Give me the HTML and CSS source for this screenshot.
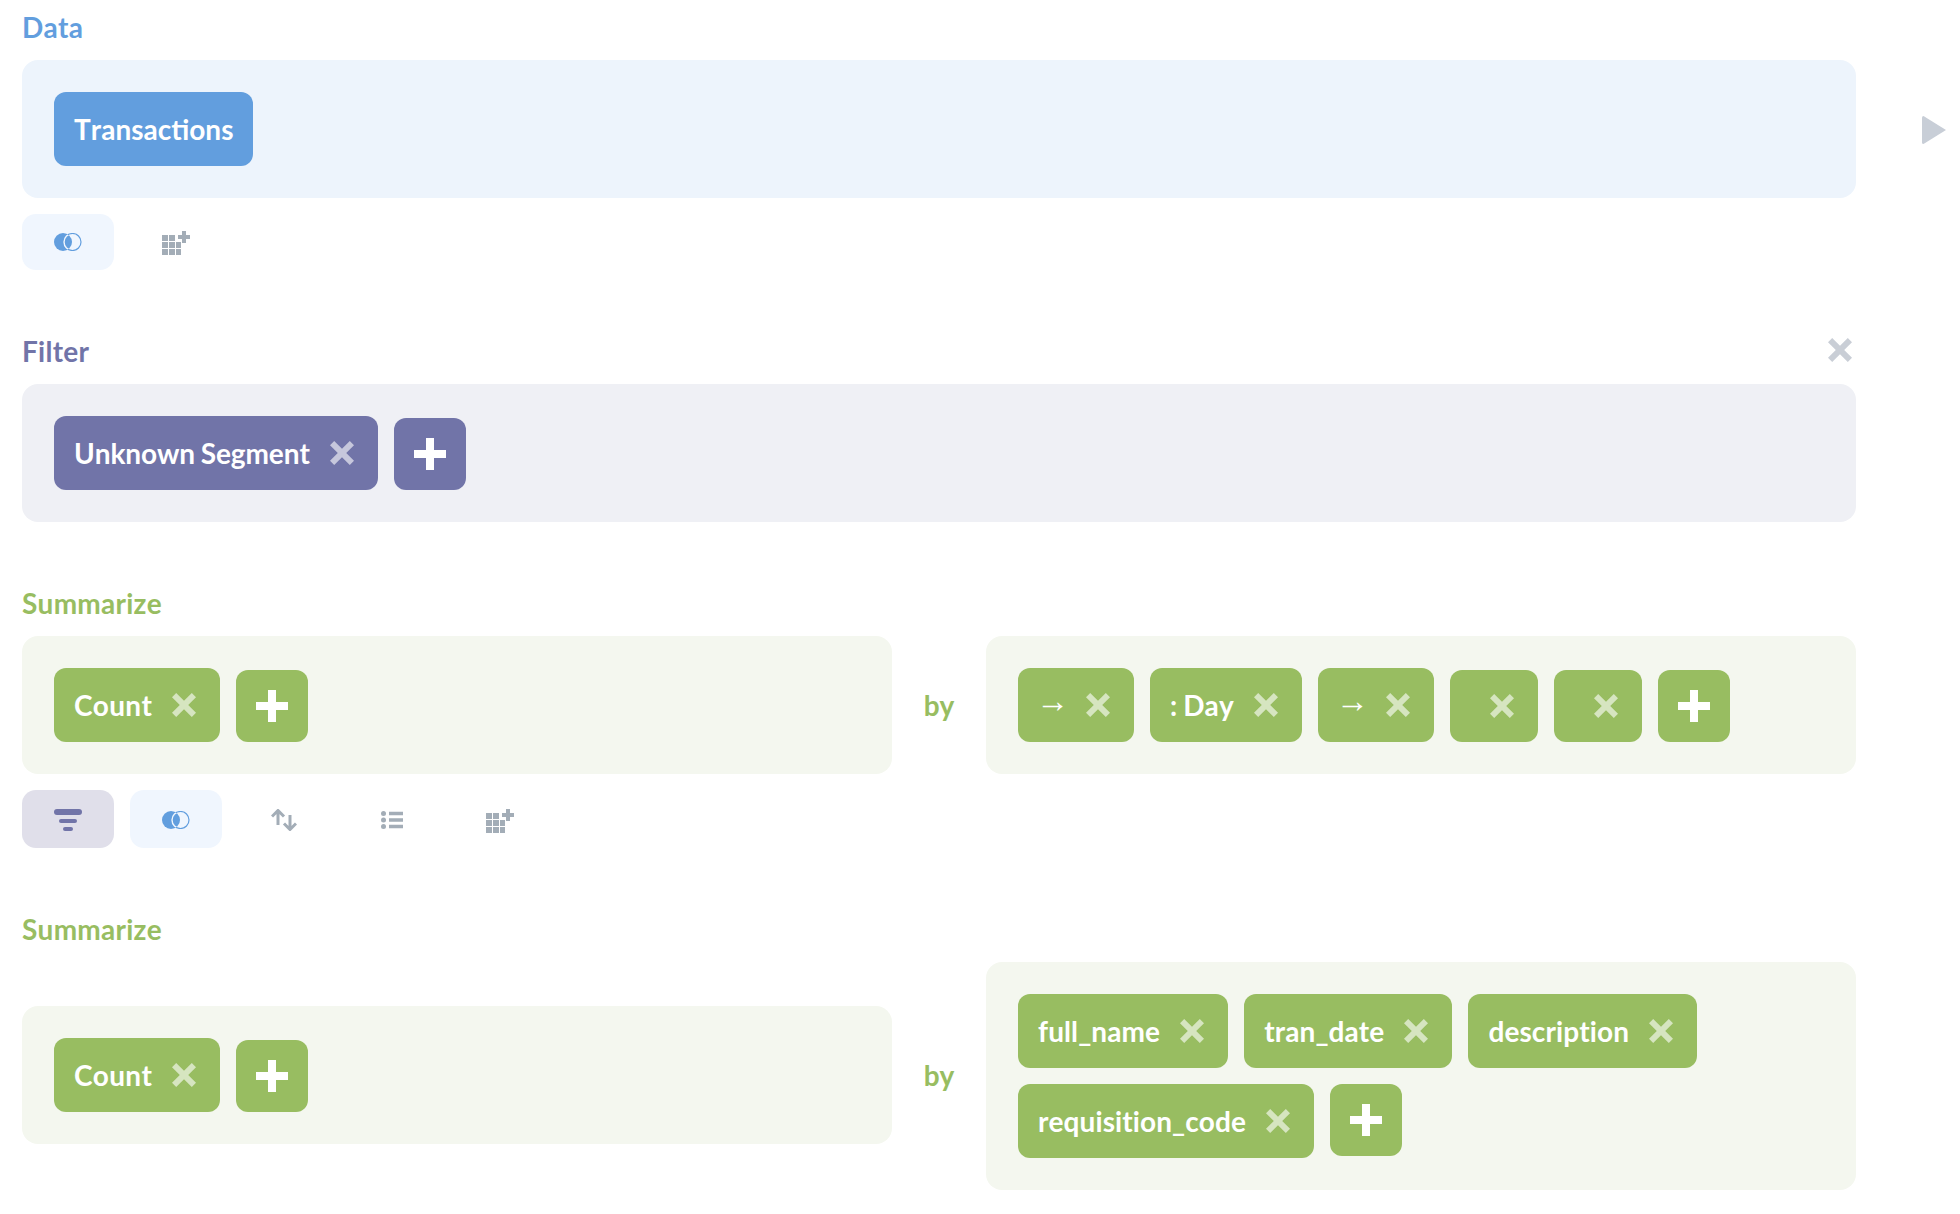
FILE: index.html
```html
<!DOCTYPE html>
<html lang="en">
<head>
  <meta charset="UTF-8">
  <title>Notebook</title>
  <link rel="stylesheet" href="styles.css">
</head>
<body>
  <svg class="sprites" width="0" height="0">
    <defs>
      <symbol id="i-x" viewBox="0 0 24 24">
        <path d="M4.2 0 12 7.8 19.800 0 24 4.200 16.200 12 24 19.800 19.800 24 12 16.200 4.200 24 0 19.800 7.800 12 0 4.200Z"/>
      </symbol>
      <symbol id="i-plus" viewBox="0 0 32 32">
        <path d="M12 0h8v12h12v8H20v12h-8V20H0v-8h12Z"/>
      </symbol>
      <symbol id="i-grid" viewBox="0 0 28 24">
        <path d="M0 4h6v6H0zM7 4h6v6H7zM0 11h6v6H0zM7 11h6v6H7zM14 11h5v6h-5zM0 18h6v6H0zM7 18h6v6H7zM14 18h5v6h-5z"/>
        <path d="M20 0h4v4h4v4h-4v4h-4V8h-4V4h4Z"/>
      </symbol>
      <symbol id="i-sort" viewBox="0 0 26 22">
        <path d="M7 16V1.500M1 7.500l6-6 6 6M19 6v14.500M13 14.500l6 6 6-6" fill="none" stroke="currentColor" stroke-width="3"/>
      </symbol>
      <symbol id="i-list" viewBox="0 0 22 18">
        <circle cx="2.500" cy="2.500" r="2.500"/>
        <circle cx="2.500" cy="9" r="2.500"/>
        <circle cx="2.500" cy="15.500" r="2.500"/>
        <path d="M8 .75h14v3.500H8zM8 7.250h14v3.500H8zM8 13.750h14v3.500H8z"/>
      </symbol>
      <symbol id="i-filter" viewBox="0 0 28 22">
        <rect x="0" y="0" width="28" height="6" rx="3"/>
        <rect x="5" y="10" width="18" height="4" rx="2"/>
        <rect x="9" y="18" width="10" height="4" rx="2"/>
      </symbol>
      <clipPath id="join-clip"><circle cx="9" cy="9" r="9"/></clipPath>
      <symbol id="i-join" viewBox="0 0 28 18">
        <circle cx="9" cy="9" r="9" fill="#629ede"/>
        <circle cx="18.500" cy="9" r="8.500" fill="none" stroke="#629ede" stroke-width="1.200"/>
        <circle cx="18.500" cy="9" r="8.500" fill="none" stroke="#f0f6fe" stroke-width="1.400" clip-path="url(#join-clip)"/>
      </symbol>
    </defs>
  </svg>

  <div class="page">
    <main class="notebook">
      <section class="step step-data">
        <h2 class="step-label">Data</h2>
        <div class="panel">
          <div class="pills">
            <div class="pill pill-text">Transactions</div>
          </div>
        </div>
        <div class="toolbar">
          <button class="tool tool-join"><svg class="icon-join"><use href="#i-join"/></svg></button>
          <button class="tool"><svg class="icon-grid"><use href="#i-grid"/></svg></button>
        </div>
      </section>

      <section class="step step-filter">
        <div class="step-head">
          <h2 class="step-label">Filter</h2>
          <svg class="step-close"><use href="#i-x"/></svg>
        </div>
        <div class="panel">
          <div class="pills">
            <div class="pill"><span class="tight">Unknown Segment</span><svg class="pill-x"><use href="#i-x"/></svg></div>
            <div class="pill pill-add"><svg class="pill-plus"><use href="#i-plus"/></svg></div>
          </div>
        </div>
      </section>

      <section class="step step-summarize">
        <h2 class="step-label">Summarize</h2>
        <div class="split">
          <div class="panel">
            <div class="pills">
              <div class="pill"><span class="wide">Count</span><svg class="pill-x"><use href="#i-x"/></svg></div>
              <div class="pill pill-add"><svg class="pill-plus"><use href="#i-plus"/></svg></div>
            </div>
          </div>
          <div class="by">by</div>
          <div class="panel">
            <div class="pills">
              <div class="pill"><span class="arrow">→</span><svg class="pill-x"><use href="#i-x"/></svg></div>
              <div class="pill"><span class="day">: Day</span><svg class="pill-x"><use href="#i-x"/></svg></div>
              <div class="pill"><span class="arrow">→</span><svg class="pill-x"><use href="#i-x"/></svg></div>
              <div class="pill pill-empty"><svg class="pill-x"><use href="#i-x"/></svg></div>
              <div class="pill pill-empty"><svg class="pill-x"><use href="#i-x"/></svg></div>
              <div class="pill pill-add"><svg class="pill-plus"><use href="#i-plus"/></svg></div>
            </div>
          </div>
        </div>
        <div class="toolbar toolbar-tall">
          <button class="tool tool-active"><svg class="icon-filter"><use href="#i-filter"/></svg></button>
          <button class="tool tool-join"><svg class="icon-join"><use href="#i-join"/></svg></button>
          <button class="tool"><svg class="icon-sort"><use href="#i-sort"/></svg></button>
          <button class="tool"><svg class="icon-list"><use href="#i-list"/></svg></button>
          <button class="tool"><svg class="icon-grid"><use href="#i-grid"/></svg></button>
        </div>
      </section>

      <section class="step step-summarize">
        <h2 class="step-label">Summarize</h2>
        <div class="split split-tall">
          <div class="panel">
            <div class="pills">
              <div class="pill"><span class="wide">Count</span><svg class="pill-x"><use href="#i-x"/></svg></div>
              <div class="pill pill-add"><svg class="pill-plus"><use href="#i-plus"/></svg></div>
            </div>
          </div>
          <div class="by">by</div>
          <div class="panel">
            <div class="pills pills-top">
              <div class="pill"><span>full_name</span><svg class="pill-x"><use href="#i-x"/></svg></div>
              <div class="pill"><span>tran_date</span><svg class="pill-x"><use href="#i-x"/></svg></div>
              <div class="pill"><span>description</span><svg class="pill-x"><use href="#i-x"/></svg></div>
              <div class="pill"><span>requisition_code</span><svg class="pill-x"><use href="#i-x"/></svg></div>
              <div class="pill pill-add"><svg class="pill-plus"><use href="#i-plus"/></svg></div>
            </div>
          </div>
        </div>
      </section>
    </main>

    <aside class="run">
      <svg class="run-icon" viewBox="0 0 24 28"><path d="M1.500 0 24 14 1.500 28Q0 28 0 26.500V1.500Q0 0 1.500 0Z"/></svg>
    </aside>
  </div>
</body>
</html>
```

FILE: styles.css
```css
* {
  box-sizing: border-box;
}
body {
  margin: 0;
  background: #ffffff;
  font-family: "Lato", "Noto Sans", sans-serif;
  font-weight: 700;
  font-size: 28px;
  font-kerning: none;
  color: #ffffff;
}
.sprites {
  display: block;
  position: absolute;
}
.page {
  display: flex;
  padding-left: 22px;
}
.notebook {
  width: 1834px;
  flex-shrink: 0;
  padding-top: 10px;
}
.run {
  padding: 116px 0 0 66px;
}
.run-icon {
  display: block;
  width: 24px;
  height: 28px;
  fill: #c8ced7;
}

/* step colours */
.step-data {
  --main: #629ede;
  --soft: #edf4fc;
}
.step-filter {
  --main: #7174a8;
  --soft: #eff0f5;
}
.step-summarize {
  --main: #98bd61;
  --soft: #f4f7ef;
}

.step {
  margin-bottom: 64px;
}
.step-head {
  display: flex;
  justify-content: space-between;
  align-items: flex-start;
  padding-right: 4px;
}
.step-label {
  margin: -1px 0 15px;
  font-size: 28px;
  line-height: 36px;
  font-weight: 700;
  letter-spacing: 0.25px;
  color: var(--main);
}
.step-close {
  width: 24px;
  height: 24px;
  margin-top: 4px;
  fill: #c9ced6;
}

.panel {
  padding: 32px;
  background: var(--soft);
  border-radius: 16px;
}
.split {
  display: grid;
  grid-template-columns: 870px 94px 870px;
  align-items: center;
}
.split-tall .panel:first-child,
.split-tall .by {
  margin-bottom: 2px;
}
.by {
  text-align: center;
  color: var(--main);
}
.pills {
  display: flex;
  flex-wrap: wrap;
  align-items: flex-end;
  gap: 16px;
}
.pills-top {
  align-items: flex-start;
}
.pill {
  display: flex;
  align-items: center;
  gap: 20px;
  height: 74px;
  padding: 0 24px 0 20px;
  background: var(--main);
  border-radius: 12px;
  line-height: 34px;
  letter-spacing: 0.1px;
}
.pill-text {
  padding-right: 20px;
  letter-spacing: 0;
}
.pill-empty {
  height: 72px;
  padding-left: 40px;
}
.pill-add {
  height: 72px;
  width: 72px;
  padding: 0;
  justify-content: center;
}
.pill-x {
  width: 24px;
  height: 24px;
  flex-shrink: 0;
  fill: rgba(255, 255, 255, 0.6);
}
.pill-plus {
  width: 32px;
  height: 32px;
  fill: #ffffff;
}
.tight {
  letter-spacing: -0.1px;
  word-spacing: -1px;
}
.wide {
  letter-spacing: 0.3px;
}
.day {
  word-spacing: -1px;
}
.arrow {
  width: 28px;
  margin: 0 2px 8px -2px;
  font-family: "Liberation Sans", sans-serif;
  font-size: 33px;
  white-space: nowrap;
}

.toolbar {
  display: flex;
  gap: 16px;
  margin-top: 16px;
}
.tool {
  display: flex;
  align-items: center;
  justify-content: center;
  width: 92px;
  height: 56px;
  padding: 0;
  border: none;
  border-radius: 14px;
  background: none;
  color: #a3adb7;
  fill: #a3adb7;
}
.toolbar-tall .tool {
  height: 58px;
  padding-top: 2px;
}
.tool-join {
  background: #f0f6fe;
}
.tool-active {
  background: #e0dfea;
  fill: #7174a8;
}
.icon-join {
  width: 28px;
  height: 18px;
}
.icon-grid {
  width: 28px;
  height: 24px;
  margin-top: 2px;
}
.icon-sort {
  width: 26px;
  height: 22px;
}
.icon-list {
  width: 22px;
  height: 18px;
}
.icon-filter {
  width: 28px;
  height: 22px;
}
```
